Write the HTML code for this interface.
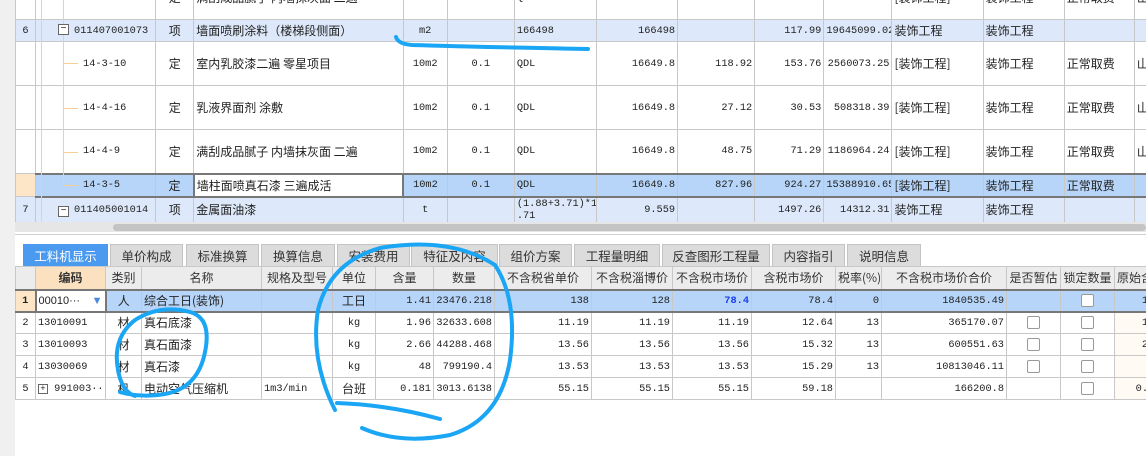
<!DOCTYPE html><html><head><meta charset="utf-8"><style>
*{margin:0;padding:0;box-sizing:border-box}
body{width:1146px;height:456px;overflow:hidden;background:#fff;font-family:"Liberation Sans","Noto Sans CJK SC",sans-serif;font-size:12px;color:#222;position:relative}
table{border-collapse:collapse;table-layout:fixed;position:absolute}
td{border:1px solid #c8c8c8;white-space:nowrap;overflow:hidden;padding:0 2px;font-family:"Liberation Mono","Noto Sans CJK SC",monospace;font-size:10.3px}
td.c{font-family:"Noto Sans CJK SC",sans-serif;font-size:12px}
.r{text-align:right}.m{text-align:center}
.b6 td{background:#dde9fa}
.sel td{background:#b6d5f8}
.hd td{background:#ececec;text-align:center;font-family:"Noto Sans CJK SC",sans-serif;font-size:12px;color:#333}
.tab{position:absolute;top:244px;height:22px;background:#dcdcdc;border:1px solid #c4c4c4;border-bottom:none;text-align:center;line-height:21px;font-size:12.5px;color:#333;font-family:"Noto Sans CJK SC",sans-serif}
.cb{display:inline-block;width:13px;height:13px;border:1px solid #999;border-radius:2px;background:#fff;vertical-align:middle}
.sb td{border-top:2px solid #777;border-bottom:2px solid #777}
</style></head><body>
<div style="position:absolute;left:0;top:0;width:15px;height:456px;background:#f0f0f0"></div>
<table style="left:15px;top:-25px;width:1140px">
<colgroup><col style="width:20px"><col style="width:120px"><col style="width:38px"><col style="width:209px"><col style="width:44px"><col style="width:67px"><col style="width:82px"><col style="width:81px"><col style="width:77px"><col style="width:69px"><col style="width:68px"><col style="width:91px"><col style="width:81px"><col style="width:70px"><col style="width:20px"></colgroup>
<tr style="height:44px"><td></td><td style="padding-left:47px">14-4-9</td><td class="c m">定</td><td class="c">满刮成品腻子 内墙抹灰面 二遍</td><td class="m">10m2</td><td class="m">0.1</td><td>QDL</td><td class="r">16649.8</td><td class="r">48.75</td><td class="r">71.29</td><td class="r">1186964.24</td><td class="c">[装饰工程]</td><td class="c">装饰工程</td><td class="c">正常取费</td><td class="c">山</td></tr>
<tr class="b6" style="height:22px"><td class="m">6</td><td style="padding-left:38px">011407001073</td><td class="c m">项</td><td class="c">墙面喷刷涂料（楼梯段侧面）</td><td class="m">m2</td><td></td><td>166498</td><td class="r">166498</td><td></td><td class="r">117.99</td><td class="r">19645099.02</td><td class="c">装饰工程</td><td class="c">装饰工程</td><td></td><td></td></tr>
<tr style="height:44px"><td></td><td style="padding-left:47px">14-3-10</td><td class="c m">定</td><td class="c">室内乳胶漆二遍 零星项目</td><td class="m">10m2</td><td class="m">0.1</td><td>QDL</td><td class="r">16649.8</td><td class="r">118.92</td><td class="r">153.76</td><td class="r">2560073.25</td><td class="c">[装饰工程]</td><td class="c">装饰工程</td><td class="c">正常取费</td><td class="c">山</td></tr>
<tr style="height:44px"><td></td><td style="padding-left:47px">14-4-16</td><td class="c m">定</td><td class="c">乳液界面剂 涂敷</td><td class="m">10m2</td><td class="m">0.1</td><td>QDL</td><td class="r">16649.8</td><td class="r">27.12</td><td class="r">30.53</td><td class="r">508318.39</td><td class="c">[装饰工程]</td><td class="c">装饰工程</td><td class="c">正常取费</td><td class="c">山</td></tr>
<tr style="height:44px"><td></td><td style="padding-left:47px">14-4-9</td><td class="c m">定</td><td class="c">满刮成品腻子 内墙抹灰面 二遍</td><td class="m">10m2</td><td class="m">0.1</td><td>QDL</td><td class="r">16649.8</td><td class="r">48.75</td><td class="r">71.29</td><td class="r">1186964.24</td><td class="c">[装饰工程]</td><td class="c">装饰工程</td><td class="c">正常取费</td><td class="c">山</td></tr>
<tr class="sel sb" style="height:23px"><td style="background:#fde6c8;border-top:1px solid #c8c8c8;border-bottom:1px solid #c8c8c8"></td><td style="padding-left:47px">14-3-5</td><td class="c m">定</td><td class="c" style="background:#fff;border:2px solid #777">墙柱面喷真石漆 三遍成活</td><td class="m">10m2</td><td class="m">0.1</td><td>QDL</td><td class="r">16649.8</td><td class="r">827.96</td><td class="r">924.27</td><td class="r">15388910.65</td><td class="c">[装饰工程]</td><td class="c">装饰工程</td><td class="c">正常取费</td><td></td></tr>
<tr class="b6" style="height:26px"><td class="m">7</td><td style="padding-left:38px">011405001014</td><td class="c m">项</td><td class="c">金属面油漆</td><td class="m">t</td><td></td><td style="line-height:12px;white-space:normal">(1.88+3.71)*1 .71</td><td class="r">9.559</td><td></td><td class="r">1497.26</td><td class="r">14312.31</td><td class="c">装饰工程</td><td class="c">装饰工程</td><td></td><td></td></tr>
</table>
<div style="position:absolute;left:41px;top:0;width:1px;height:222px;background:#f5cf94"></div>
<div style="position:absolute;left:63px;top:0;width:1px;height:186px;background:#f5cf94"></div>
<div style="position:absolute;left:63px;top:63px;width:15px;height:1px;background:#f5cf94"></div>
<div style="position:absolute;left:63px;top:108px;width:15px;height:1px;background:#f5cf94"></div>
<div style="position:absolute;left:63px;top:152px;width:15px;height:1px;background:#f5cf94"></div>
<div style="position:absolute;left:63px;top:185px;width:15px;height:1px;background:#f5cf94"></div>
<div style="position:absolute;left:58px;top:24px;width:11px;height:11px;border:1px solid #666;background:#fff;font-size:10px;line-height:8px;text-align:center">−</div>
<div style="position:absolute;left:58px;top:206px;width:11px;height:11px;border:1px solid #666;background:#fff;font-size:10px;line-height:8px;text-align:center">−</div>
<div style="position:absolute;left:15px;top:222px;width:1131px;height:10px;background:#e6e6e6"></div>
<div style="position:absolute;left:113px;top:224px;width:1033px;height:7px;background:#c4c4c4;border-radius:4px"></div>
<div style="position:absolute;left:15px;top:234px;width:1131px;height:1px;background:#d0d0d0"></div>
<div class="tab" style="left:23px;width:85px;background:#4a9af0;color:#fff;border-color:#4a9af0">工料机显示</div>
<div class="tab" style="left:110px;width:73px">单价构成</div>
<div class="tab" style="left:186px;width:73px">标准换算</div>
<div class="tab" style="left:261px;width:74px">换算信息</div>
<div class="tab" style="left:337px;width:73px">安装费用</div>
<div class="tab" style="left:411px;width:87px">特征及内容</div>
<div class="tab" style="left:499px;width:73px">组价方案</div>
<div class="tab" style="left:574px;width:86px">工程量明细</div>
<div class="tab" style="left:662px;width:108px">反查图形工程量</div>
<div class="tab" style="left:772px;width:73px">内容指引</div>
<div class="tab" style="left:847px;width:74px">说明信息</div>
<table style="left:15px;top:266px;width:1135px">
<colgroup><col style="width:20px"><col style="width:70px"><col style="width:36px"><col style="width:120px"><col style="width:71px"><col style="width:43px"><col style="width:58px"><col style="width:61px"><col style="width:97px"><col style="width:81px"><col style="width:79px"><col style="width:84px"><col style="width:46px"><col style="width:125px"><col style="width:54px"><col style="width:54px"><col style="width:36px"></colgroup>
<tr class="hd" style="height:23px"><td></td><td style="background:#fbe1c0;font-weight:bold">编码</td><td>类别</td><td>名称</td><td>规格及型号</td><td>单位</td><td>含量</td><td>数量</td><td>不含税省单价</td><td>不含税淄博价</td><td>不含税市场价</td><td>含税市场价</td><td>税率(%)</td><td>不含税市场价合价</td><td>是否暂估</td><td>锁定数量</td><td>原始含</td></tr>
<tr class="sel sb" style="height:22px"><td class="m" style="background:#fde6c8;font-weight:bold">1</td><td style="background:#fff;border:2px solid #777;font-family:'Liberation Sans';font-size:11px">00010··· <span style="color:#4a8ad8;float:right">▼</span></td><td class="c m">人</td><td class="c">综合工日(装饰)</td><td></td><td class="c m">工日</td><td class="r">1.41</td><td class="r">23476.218</td><td class="r">138</td><td class="r">128</td><td class="r" style="color:#1a3cf0;font-weight:bold">78.4</td><td class="r">78.4</td><td class="r">0</td><td class="r">1840535.49</td><td></td><td class="m"><span class="cb"></span></td><td class="r">1</td></tr>
<tr style="height:22px"><td class="m">2</td><td>13010091</td><td class="c m">材</td><td class="c">真石底漆</td><td></td><td class="m">kg</td><td class="r">1.96</td><td class="r">32633.608</td><td class="r">11.19</td><td class="r">11.19</td><td class="r">11.19</td><td class="r">12.64</td><td class="r">13</td><td class="r">365170.07</td><td class="m"><span class="cb"></span></td><td class="m"><span class="cb"></span></td><td class="r" style="background:#fffaf4">1</td></tr>
<tr style="height:22px"><td class="m">3</td><td>13010093</td><td class="c m">材</td><td class="c">真石面漆</td><td></td><td class="m">kg</td><td class="r">2.66</td><td class="r">44288.468</td><td class="r">13.56</td><td class="r">13.56</td><td class="r">13.56</td><td class="r">15.32</td><td class="r">13</td><td class="r">600551.63</td><td class="m"><span class="cb"></span></td><td class="m"><span class="cb"></span></td><td class="r" style="background:#fffaf4">2</td></tr>
<tr style="height:22px"><td class="m">4</td><td>13030069</td><td class="c m">材</td><td class="c">真石漆</td><td></td><td class="m">kg</td><td class="r">48</td><td class="r">799190.4</td><td class="r">13.53</td><td class="r">13.53</td><td class="r">13.53</td><td class="r">15.29</td><td class="r">13</td><td class="r">10813046.11</td><td class="m"><span class="cb"></span></td><td class="m"><span class="cb"></span></td><td style="background:#fffaf4"></td></tr>
<tr style="height:22px"><td class="m">5</td><td><span style="display:inline-block;width:10px;height:10px;border:1px solid #666;font-size:9px;line-height:8px;text-align:center">+</span> 991003···</td><td class="c m">机</td><td class="c">电动空气压缩机</td><td>1m3/min</td><td class="c m">台班</td><td class="r">0.181</td><td class="r">3013.6138</td><td class="r">55.15</td><td class="r">55.15</td><td class="r">55.15</td><td class="r">59.18</td><td></td><td class="r">166200.8</td><td></td><td class="m"><span class="cb"></span></td><td class="r" style="background:#fffaf4">0.</td></tr>
</table>
<svg style="position:absolute;left:0;top:0" width="1146" height="456">
<g fill="none" stroke="#1aa6f5" stroke-width="4" stroke-linecap="round">
<path d="M396 37 Q398 44 412 45 Q480 47 588 49"/>
<path d="M120 392 Q140 398 165 394 Q198 388 205 352 Q212 318 190 312 Q160 304 135 320 Q112 338 118 370 Q122 392 135 396"/>
<path d="M335 410 Q310 360 318 310 Q330 262 380 248 Q450 236 495 265 Q518 300 510 360 Q500 420 450 435 Q400 445 362 428"/>
<path d="M337 403 Q390 405 440 419"/>
</g></svg>
</body></html>
